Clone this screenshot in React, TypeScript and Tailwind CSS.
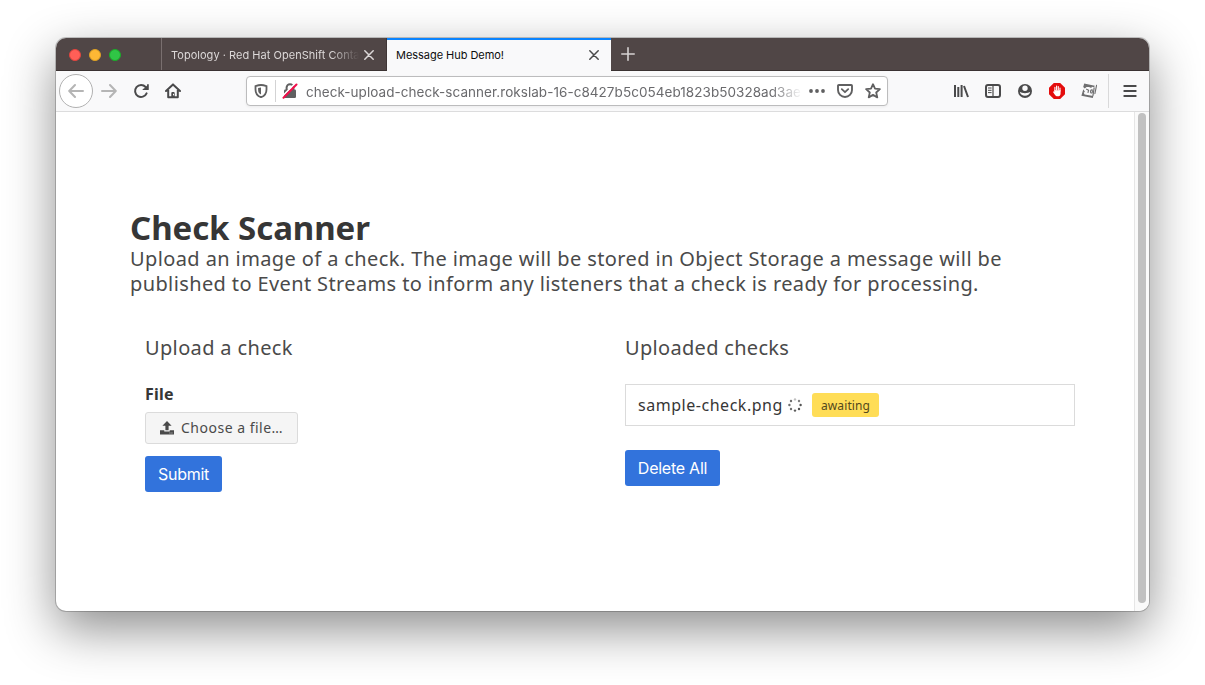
import React from "react";

const humanist = "font-['Noto_Sans','Open_Sans',sans-serif]";
const ui = "font-['Inter',sans-serif]";

function Cross() {
  return (
    <svg width="10" height="10" viewBox="0 0 10 10" stroke="currentColor" strokeWidth="1.5" strokeLinecap="round">
      <path d="M.8.8l8.4 8.4M9.2.8L.8 9.2" />
    </svg>
  );
}

function TabBar() {
  return (
    <div className="flex h-[33px] shrink-0 border-b border-[#3a3232] bg-[#504646]">
      <div className="flex w-[106px] items-center gap-[8px] border-r border-[#796f6f] pt-[2px] pl-[13px]">
        <span className="h-3 w-3 rounded-full border border-[#e0443e] bg-[#ff5f57]" />
        <span className="h-3 w-3 rounded-full border border-[#dea123] bg-[#fdb835]" />
        <span className="h-3 w-3 rounded-full border border-[#1aab29] bg-[#30c546]" />
      </div>
      <div className="flex h-[33px] w-[225px] items-center border-r border-[#3f3636] pl-[9px] text-[#dcd8d8]">
        <span className={`${ui} mt-[2px] w-[189px] overflow-hidden whitespace-nowrap text-[11px] tracking-[0.03px] [mask-image:linear-gradient(to_right,black_160px,transparent_188px)]`}>
          Topology · Red Hat OpenShift Conta
        </span>
        <span className="ml-[4px]"><Cross /></span>
      </div>
      <div className="flex h-[33px] w-[224px] shrink-0 items-center justify-between border-t-2 border-[#0a84ff] bg-[#f9f9fa] pr-[12px] pl-[9px]">
        <span className={`${ui} text-[11px] tracking-[-0.04px] text-[#0c0c0d]`}>Message Hub Demo!</span>
        <span className="-mt-px text-[#4a4a4a]"><Cross /></span>
      </div>
      <div className="flex items-center pl-[10px] text-[#d6d2d2]">
        <svg width="14" height="14" viewBox="0 0 14 14" stroke="currentColor" strokeWidth="1.6" strokeLinecap="round">
          <path d="M7 .8v12.4M.8 7h12.4" />
        </svg>
      </div>
    </div>
  );
}

function Icon({ children, className = "" }: { children: React.ReactNode; className?: string }) {
  return (
    <svg width="16" height="16" viewBox="0 0 16 16" fill="none" stroke="currentColor" strokeWidth="2" strokeLinecap="round" strokeLinejoin="round" className={`shrink-0 ${className}`}>
      {children}
    </svg>
  );
}

function ToolBar() {
  return (
    <div className="flex h-[41px] shrink-0 items-center border-b border-[#dcdcdd] bg-[#f9f9fa] text-[#4a4a4b]">
      <div className="ml-[3px] flex h-[34px] w-[34px] items-center justify-center rounded-full border border-[#b1b1b1] bg-white text-[#b5b5b5]">
        <Icon><path d="M15 8H1.5M7 2L1.2 8 7 14" /></Icon>
      </div>
      <Icon className="ml-[8px] text-[#b5b5b5]"><path d="M1 8h13.5M9 2l5.8 6L9 14" /></Icon>
      <Icon className="ml-[16px]">
        <path d="M13.6 10.3A6 6 0 1 1 12.6 4" />
        <path d="M15.6 1v6H9.6z" fill="currentColor" stroke="none" />
        <path d="M14.8 1.7v4.6H10.2" strokeWidth="1.2" />
      </Icon>
      <Icon className="ml-[16px]">
        <path d="M1 8l7-6.6L15 8M3.2 7v7.3h9.6V7" />
        <path d="M6.3 14v-4a1 1 0 0 1 1-1h1.4a1 1 0 0 1 1 1v4z" fill="currentColor" stroke="none" />
        <path d="M8.5 11.2v.8" stroke="white" strokeWidth="1" />
      </Icon>
      <div className="ml-[65px] flex h-[30px] w-[642px] items-center rounded-[4px] border border-[#bcbcbd] bg-white shadow-[0_1px_3px_rgba(0,0,0,0.06)]">
        <svg width="14" height="14" viewBox="0 0 14 14" fill="none" className="ml-[7px] shrink-0 text-[#606061]">
          <path d="M7 1C5.2 1 3.2 1.5 1.5 2.1v3.3c0 4 2 6.6 5.5 7.8 3.5-1.2 5.5-3.8 5.5-7.8V2.1C10.8 1.5 8.8 1 7 1z" stroke="currentColor" strokeWidth="1.8" />
          <path d="M7 3.4c-1 0-2 .3-2.9.6v1.7c0 2.4 1 4 2.9 4.900z" fill="currentColor" />
        </svg>
        <span className="ml-[7px] h-[22px] w-px bg-[#d3d3d4]" />
        <svg width="16" height="16" viewBox="0 0 16 16" fill="none" className="ml-[6px] shrink-0">
          <path d="M4.6 7V4.6a3.4 3.4 0 0 1 6.8 0V7" stroke="#606061" strokeWidth="2" />
          <rect x="2" y="6.5" width="12" height="8.5" rx="1.2" fill="#606061" />
          <path d="M.3 13.4L13.3.2" stroke="white" strokeWidth="1.6" />
          <path d="M1.5 14.7L14.5 1.5" stroke="#f20f4b" strokeWidth="2" strokeLinecap="round" />
        </svg>
        <span className={`${ui} mt-[2px] ml-[8px] w-[496px] overflow-hidden whitespace-nowrap text-[13.5px] tracking-[0.05px] text-[#6a6a6d] [mask-image:linear-gradient(to_right,black_465px,transparent_496px)]`}>
          check-upload-check-scanner.rokslab-16-c8427b5c054eb1823b50328ad3ae
        </span>
        <svg width="16" height="16" viewBox="0 0 16 16" fill="#606061" className="ml-[7px] shrink-0">
          <circle cx="2" cy="8" r="1.9" /><circle cx="8" cy="8" r="1.9" /><circle cx="14" cy="8" r="1.9" />
        </svg>
        <Icon className="ml-[12px] text-[#606061]">
          <path d="M1.8 2h12.4a.8.8 0 0 1 .8.8V7A7 7 0 0 1 1 7V2.800a.8.8 0 0 1 .8-.8z" strokeWidth="1.9" />
          <path d="M4.8 6.200L8 9.200l3.200-3" strokeWidth="1.8" />
        </Icon>
        <Icon className="ml-[12px] text-[#606061]">
          <path d="M8 1.200l2 4.500 4.900.5-3.700 3.300 1.100 4.900L8 11.900l-4.300 2.500 1.100-4.900L1.100 6.200 6 5.700z" strokeWidth="1.8" />
        </Icon>
      </div>
      <Icon className="ml-[65px]">
        <path d="M2 2v12M5.300 4v10M8.600 2v12M11 3l4 11" strokeLinecap="butt" />
      </Icon>
      <Icon className="ml-[16px]">
        <rect x="1" y="2" width="14" height="12" rx="2" />
        <path d="M8 2v12" strokeWidth="1.2" />
        <path d="M3.400 5h2.800M3.400 7.300h2.800M3.400 9.600h2.800" strokeWidth="1" />
      </Icon>
      <Icon className="ml-[16px]">
        <circle cx="8" cy="8" r="7" fill="currentColor" stroke="none" />
        <path d="M5.300 5.200a2.700 2.700 0 0 0 5.400 0 2.700 2.700 0 0 0-5.400 0z" fill="#f9f9fa" stroke="none" />
        <path d="M2.800 8.800c1.700 1.800 8.700 1.800 10.400 0-.7 5.200-9.700 5.200-10.400 0z" fill="#f9f9fa" stroke="none" />
      </Icon>
      <Icon className="ml-[16px]">
        <path d="M4.800 0h6.400L16 4.800v6.400L11.200 16H4.800L0 11.200V4.800z" fill="#e40d0d" stroke="none" />
        <path d="M5.900 8V4.300M7.600 7V3M9.300 7V3.500M11 8V5" stroke="white" strokeWidth="1.1" />
        <path d="M5.350 7.200h6.200v3.300c0 2-1.100 2.800-2.750 2.800-1.800 0-2.600-.9-3.300-2.100L4 8.900c.3-.6.9-.6 1.350 0z" fill="white" stroke="none" />
      </Icon>
      <Icon className="ml-[16px] text-[#6f6f70]">
        <path d="M3.200.6l10.600 2.200-.7 1.500-2.300-.5-.5 1.200-2.300-1.100-2.500.2-1.700 1.500-1.600-1.500z" fill="currentColor" stroke="none" />
        <path d="M2.300 6.200L.4 12.800l11.400 2.200.5-2-8.700-1.500-.9-1.700 1.200-1z" fill="currentColor" stroke="none" />
        <path d="M5.600 6.200l2 1.100-.6 2.200" strokeWidth="1.1" />
        <path d="M11.200 6.800c-1.500-.4-2.200 1.800-1.300 3 .7.600 1.400 0 1.500-.8z" strokeWidth="1.100" />
        <path d="M13.200 4.500l-1.300 8.500" strokeWidth="1.200" strokeLinecap="butt" />
        <path d="M15.600 2.200l-1.700 8.500" strokeWidth="1.100" />
      </Icon>
      <span className="ml-[11px] h-[34px] w-px bg-[#d9d9da]" />
      <Icon className="ml-[13px]"><path d="M2.300 3h11.400M2.300 8h11.400M2.300 13h11.400" /></Icon>
    </div>
  );
}

const spokes = [
  { x: 7, y: 1.4, o: 0.35 },
  { x: 11, y: 3, o: 0.7 },
  { x: 12.6, y: 7, o: 0.95 },
  { x: 11, y: 11, o: 0.95 },
  { x: 7, y: 12.6, o: 0.9 },
  { x: 3, y: 11, o: 0.8 },
  { x: 1.4, y: 7, o: 0.8 },
  { x: 3, y: 3, o: 0.8 },
];

function UploadColumn() {
  return (
    <div className="w-[480px] pl-[15px]">
      <h2 className="h-[25px] text-[20px] leading-[25px] tracking-[0.35px] whitespace-nowrap text-[#4a4a4a]">Upload a check</h2>
      <label className="mt-[22px] block h-6 text-[16px] leading-6 font-bold tracking-[0.25px] text-[#363636]">File</label>
      <button className="mt-[6px] flex h-[32px] w-[153px] items-center rounded-[3px] border border-[#dbdbdb] bg-[#f5f5f5] pl-[14px] text-[#4a4a4a]">
        <svg width="14" height="14" viewBox="0 0 14 14" fill="currentColor" className="shrink-0">
          <path d="M7 0l4.600 4.700H8.600v4.500H5.400V4.700H2.400z" />
          <path d="M0 9.300h4.300v1.200h5.400V9.300H14v4.300H0z" />
          <path d="M9.500 12h.9M11.500 12h.9" stroke="#f5f5f5" strokeWidth=".8" />
        </svg>
        <span className="-mt-[2px] ml-[7px] text-[14px] tracking-[0.5px] whitespace-nowrap">Choose a file…</span>
      </button>
      <button className={`${ui} mt-[12px] flex h-[36px] w-[77px] items-center justify-center rounded-[3px] bg-[#3273dc] text-[16px] tracking-[-0.3px] text-white`}>Submit</button>
    </div>
  );
}

function ChecksColumn() {
  return (
    <div className="w-[465px] pl-[15px]">
      <h2 className="h-[25px] text-[20px] leading-[25px] tracking-[0.31px] whitespace-nowrap text-[#4a4a4a]">Uploaded checks</h2>
      <div className="mt-[24px] flex h-[42px] w-[450px] items-center border border-[#dbdbdb] pl-[12px] text-[#363636]">
        <span className="w-[150px] text-[16px] tracking-[0.53px] whitespace-nowrap">sample-check.png</span>
        <svg width="14" height="14" viewBox="0 0 14 14" fill="#4a4a4a" className="shrink-0">
          {spokes.map((s) => <circle key={`${s.x}-${s.y}`} cx={s.x} cy={s.y} r="1.2" opacity={s.o} />)}
        </svg>
        <span className="ml-[10px] flex h-[24px] w-[67px] items-center justify-center rounded-[3px] bg-[#ffdd57] pt-px text-[12px] tracking-[0.1px] text-[#54491d]">awaiting</span>
      </div>
      <button className={`${ui} mt-[24px] flex h-[36px] w-[95px] items-center justify-center rounded-[3px] bg-[#3273dc] text-[16px] tracking-[-0.25px] whitespace-nowrap text-white`}>Delete All</button>
    </div>
  );
}

export default function App() {
  return (
    <div className="h-[685px] w-[1205px] overflow-hidden bg-white pt-[38px] pl-[56px]">
      <div className="flex h-[573px] w-[1093px] flex-col overflow-hidden rounded-[10px] bg-white shadow-[0_0_0_1px_rgba(0,0,0,0.2),0_18px_50px_rgba(0,0,0,0.45)]">
        <TabBar />
        <ToolBar />
        <div className="flex min-h-0 flex-1">
          <main className={`${humanist} w-[1078px] pt-[97px] pl-[74px]`}>
            <h1 className="h-[37px] text-[33px] leading-[38px] font-bold tracking-[-0.06px] whitespace-nowrap text-[#363636]">Check Scanner</h1>
            <p className="text-[20px] leading-[25px] text-[#4a4a4a]">
              <span className="block tracking-[0.39px] whitespace-nowrap">Upload an image of a check. The image will be stored in Object Storage a message will be</span>
              <span className="block tracking-[0.38px] whitespace-nowrap">published to Event Streams to inform any listeners that a check is ready for processing.</span>
            </p>
            <div className="mt-[39px] flex">
              <UploadColumn />
              <ChecksColumn />
            </div>
          </main>
          <div className="flex w-[15px] justify-center border-l border-[#e6e6e6] bg-[#fafafa] pt-[1px]">
            <span className="h-[490px] w-[8px] rounded-full bg-[#c1c1c1]" />
          </div>
        </div>
      </div>
    </div>
  );
}
